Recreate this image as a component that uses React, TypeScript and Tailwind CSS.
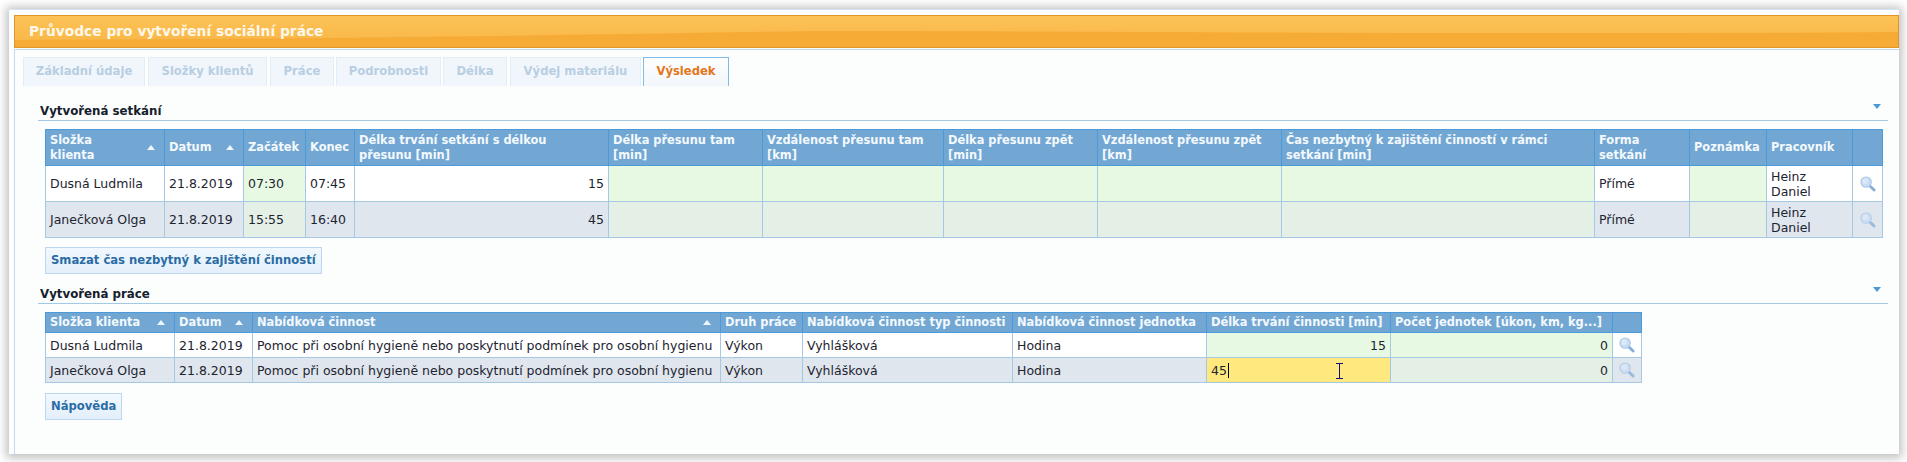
import React from "react";

const thBase =
  "border border-[#4c9ad9] bg-[#72a7d3] px-[4px] text-left align-middle text-[11.4px] font-bold leading-[15px] text-[#f4f9fd]";
const tdBase = "border border-[#a5c9e5] px-[4px] align-middle text-[12.5px] leading-[15px] text-[#1c2430]";

function Magnifier({ dim }: { dim?: boolean }) {
  return (
    <svg width="16" height="16" viewBox="0 0 17 17" className={dim ? "mx-auto block opacity-80" : "mx-auto block"}>
      <path d="M10.5 10.5 L15 15" stroke="#86b0dc" strokeWidth="3" strokeLinecap="round" />
      <circle cx="6.5" cy="6.5" r="5.5" fill="#c9dcf3" stroke="#a9c6e8" strokeWidth="1.2" />
      <circle cx="5.5" cy="5.5" r="3" fill="#dbe8f8" />
    </svg>
  );
}

function SortArrow() {
  return <span className="block h-0 w-0 shrink-0 border-x-[4px] border-b-[5px] border-x-transparent border-b-[#eef5fb]" />;
}

function SortHead({ label, w }: { label: string; w: string }) {
  return (
    <th className={`${thBase} ${w}`}>
      <div className="flex items-center justify-between pr-[5px]">
        <span className="pr-[8px]">{label}</span>
        <SortArrow />
      </div>
    </th>
  );
}

function SectionTitle({ title }: { title: string }) {
  return (
    <div className="ml-[23px] mr-[11px] flex h-[22px] items-center justify-between border-b border-[#a3c9e8] pl-[2px] pt-[4px]">
      <span className="text-[11.8px] font-bold text-[#14202c]">{title}</span>
      <span className="mb-[10px] mr-[7px] block h-0 w-0 border-x-[4px] border-t-[5px] border-x-transparent border-t-[#4b9ad8]" />
    </div>
  );
}

function Button({ label }: { label: string }) {
  return (
    <button className="ml-[30px] block h-[27px] border border-[#bcd7ef] bg-gradient-to-b from-[#f1f8fe] to-[#e3effb] px-[5px] text-[11.6px] font-bold text-[#2b6ca5]">
      {label}
    </button>
  );
}

const tabs = [
  { label: "Základní údaje", w: "w-[122px]", gap: "mr-[3px]" },
  { label: "Složky klientů", w: "w-[119px]", gap: "mr-[3px]" },
  { label: "Práce", w: "w-[64px]", gap: "mr-[2px]" },
  { label: "Podrobnosti", w: "w-[105px]", gap: "mr-[2px]" },
  { label: "Délka", w: "w-[64px]", gap: "mr-[3px]" },
  { label: "Výdej materiálu", w: "w-[131px]", gap: "mr-[2px]" },
];

const meetings = [
  { name: "Dusná Ludmila", start: "07:30", end: "07:45", total: 15, alt: false },
  { name: "Janečková Olga", start: "15:55", end: "16:40", total: 45, alt: true },
];

export default function App() {
  return (
    <div className="h-[462px] overflow-hidden bg-white pb-[8px] pl-[9px] pr-[8px] pt-[9px] font-['DejaVu_Sans',sans-serif]">
      <div className="flex h-[445px] flex-col border-t border-[#d5e6f2] bg-[#fcfefe] pl-[5px] pt-[5px] shadow-[0_1px_9px_3px_rgba(0,0,0,0.25)]">
        <div className="relative h-[33px] shrink-0 border border-[#e2962a] bg-gradient-to-b from-[#fcc255] to-[#f9b546] pl-[14px] text-[13.8px] font-bold leading-[30px] text-[#fff8ea]">
          {/* glossy wave of the title bar */}
          <svg viewBox="0 0 1885 31" preserveAspectRatio="none" className="absolute inset-0 h-full w-full">
            <path d="M0 24C300 23 500 20 800 15C1100 15 1500 19 1885 16V31H0Z" fill="#f7ab37" />
          </svg>
          <span className="relative">Průvodce pro vytvoření sociální práce</span>
        </div>
        <div className="mt-[1px] flex-1 border-l border-t border-[#c3daed]">
          <div className="flex h-[36px] items-end pl-[8px]">
            {tabs.map((t) => (
              <div
                key={t.label}
                className={`h-[29px] border border-b-0 border-[#e3edf6] bg-[#f1f6fd] text-center text-[11.6px] font-bold leading-[27px] text-[#b8cee1] ${t.w} ${t.gap}`}
              >
                {t.label}
              </div>
            ))}
            <div className="h-[29px] w-[86px] border border-b-0 border-[#7fbbe9] bg-gradient-to-b from-[#fdfefe] to-[#f2f7fb] text-center text-[11.6px] font-bold leading-[27px] text-[#e4761a]">
              Výsledek
            </div>
          </div>

          <div className="pt-[13px]">
            <SectionTitle title="Vytvořená setkání" />
          </div>

          <div className="pl-[30px] pt-[8px]">
            <table className="w-[1837px] table-fixed border-collapse">
              <thead>
                <tr className="h-[36px]">
                  <SortHead label="Složka klienta" w="w-[119px]" />
                  <SortHead label="Datum" w="w-[79px]" />
                  <th className={`${thBase} w-[62px]`}>Začátek</th>
                  <th className={`${thBase} w-[49px]`}>Konec</th>
                  <th className={`${thBase} w-[254px] pr-[12px]`}>Délka trvání setkání s délkou přesunu [min]</th>
                  <th className={`${thBase} w-[154px]`}>Délka přesunu tam [min]</th>
                  <th className={`${thBase} w-[181px]`}>Vzdálenost přesunu tam [km]</th>
                  <th className={`${thBase} w-[154px]`}>Délka přesunu zpět [min]</th>
                  <th className={`${thBase} w-[184px]`}>Vzdálenost přesunu zpět [km]</th>
                  <th className={`${thBase} w-[313px]`}>Čas nezbytný k zajištění činností v rámci setkání [min]</th>
                  <th className={`${thBase} w-[95px]`}>Forma setkání</th>
                  <th className={`${thBase} w-[77px]`}>Poznámka</th>
                  <th className={`${thBase} w-[86px]`}>Pracovník</th>
                  <th className={`${thBase} w-[30px]`}></th>
                </tr>
              </thead>
              <tbody>
                {meetings.map((m) => {
                  const bg = m.alt ? "bg-[#e0e6ee]" : "bg-white";
                  const green = m.alt ? "bg-[#e4f0e6]" : "bg-[#e8f9e3]";
                  return (
                    <tr key={m.name} className="h-[36px]">
                      <td className={`${tdBase} ${bg}`}>{m.name}</td>
                      <td className={`${tdBase} ${bg}`}>21.8.2019</td>
                      <td className={`${tdBase} ${green}`}>{m.start}</td>
                      <td className={`${tdBase} ${bg}`}>{m.end}</td>
                      <td className={`${tdBase} ${bg} text-right`}>{m.total}</td>
                      <td className={`${tdBase} ${green}`}></td>
                      <td className={`${tdBase} ${green}`}></td>
                      <td className={`${tdBase} ${green}`}></td>
                      <td className={`${tdBase} ${green}`}></td>
                      <td className={`${tdBase} ${green}`}></td>
                      <td className={`${tdBase} ${bg}`}>Přímé</td>
                      <td className={`${tdBase} ${green}`}></td>
                      <td className={`${tdBase} ${bg}`}>Heinz Daniel</td>
                      <td className={`${tdBase} ${bg}`}>
                        <Magnifier dim={m.alt} />
                      </td>
                    </tr>
                  );
                })}
              </tbody>
            </table>
          </div>

          <div className="pt-[9px]">
            <Button label="Smazat čas nezbytný k zajištění činností" />
          </div>

          <div className="pt-[8px]">
            <SectionTitle title="Vytvořená práce" />
          </div>

          <div className="pl-[30px] pt-[8px]">
            <table className="w-[1596px] table-fixed border-collapse">
              <thead>
                <tr className="h-[20px]">
                  <SortHead label="Složka klienta" w="w-[129px]" />
                  <SortHead label="Datum" w="w-[78px]" />
                  <SortHead label="Nabídková činnost" w="w-[468px]" />
                  <th className={`${thBase} w-[82px]`}>Druh práce</th>
                  <th className={`${thBase} w-[210px]`}>Nabídková činnost typ činnosti</th>
                  <th className={`${thBase} w-[194px]`}>Nabídková činnost jednotka</th>
                  <th className={`${thBase} w-[184px]`}>Délka trvání činnosti [min]</th>
                  <th className={`${thBase} w-[222px]`}>Počet jednotek [úkon, km, kg...]</th>
                  <th className={`${thBase} w-[29px]`}></th>
                </tr>
              </thead>
              <tbody>
                <tr className="h-[25px]">
                  <td className={`${tdBase} bg-white`}>Dusná Ludmila</td>
                  <td className={`${tdBase} bg-white`}>21.8.2019</td>
                  <td className={`${tdBase} bg-white`}>Pomoc při osobní hygieně nebo poskytnutí podmínek pro osobní hygienu</td>
                  <td className={`${tdBase} bg-white`}>Výkon</td>
                  <td className={`${tdBase} bg-white`}>Vyhlášková</td>
                  <td className={`${tdBase} bg-white`}>Hodina</td>
                  <td className={`${tdBase} bg-[#e8f9e3] text-right`}>15</td>
                  <td className={`${tdBase} bg-[#e8f9e3] text-right`}>0</td>
                  <td className={`${tdBase} bg-white`}>
                    <Magnifier />
                  </td>
                </tr>
                <tr className="h-[25px]">
                  <td className={`${tdBase} bg-[#e0e6ee]`}>Janečková Olga</td>
                  <td className={`${tdBase} bg-[#e0e6ee]`}>21.8.2019</td>
                  <td className={`${tdBase} bg-[#e0e6ee]`}>Pomoc při osobní hygieně nebo poskytnutí podmínek pro osobní hygienu</td>
                  <td className={`${tdBase} bg-[#e0e6ee]`}>Výkon</td>
                  <td className={`${tdBase} bg-[#e0e6ee]`}>Vyhlášková</td>
                  <td className={`${tdBase} bg-[#e0e6ee]`}>Hodina</td>
                  <td className={`${tdBase} relative bg-[#ffe97f]`}>
                    <span className="border-r border-black pr-[1px]">45</span>
                    {/* mouse cursor over the field */}
                    <svg width="9" height="16" viewBox="0 0 9 16" className="absolute left-[128px] top-[5px]">
                      <path d="M1 .5H8M4.5 .5V15.5M1 15.5H8" stroke="#10107a" strokeWidth="1" fill="none" />
                    </svg>
                  </td>
                  <td className={`${tdBase} bg-[#e4f0e6] text-right`}>0</td>
                  <td className={`${tdBase} bg-[#e0e6ee]`}>
                    <Magnifier dim />
                  </td>
                </tr>
              </tbody>
            </table>
          </div>

          <div className="pt-[10px]">
            <Button label="Nápověda" />
          </div>
        </div>
      </div>
    </div>
  );
}
